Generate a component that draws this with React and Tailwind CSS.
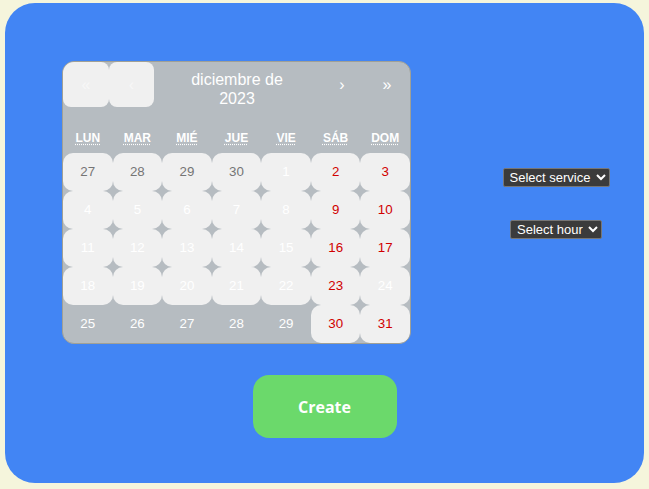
import { useState } from 'react';

const weekdays = [
    { short: 'LUN', title: 'lunes' },
    { short: 'MAR', title: 'martes' },
    { short: 'MIÉ', title: 'miércoles' },
    { short: 'JUE', title: 'jueves' },
    { short: 'VIE', title: 'viernes' },
    { short: 'SÁB', title: 'sábado' },
    { short: 'DOM', title: 'domingo' },
];

// kind: prev = neighbouring month, off = disabled, wkoff = disabled weekend, open
const days = [
    [27, 'prev'], [28, 'prev'], [29, 'prev'], [30, 'prev'], [1, 'off'], [2, 'wkoff'], [3, 'wkoff'],
    [4, 'off'], [5, 'off'], [6, 'off'], [7, 'off'], [8, 'off'], [9, 'wkoff'], [10, 'wkoff'],
    [11, 'off'], [12, 'off'], [13, 'off'], [14, 'off'], [15, 'off'], [16, 'wkoff'], [17, 'wkoff'],
    [18, 'off'], [19, 'off'], [20, 'off'], [21, 'off'], [22, 'off'], [23, 'wkoff'], [24, 'off'],
    [25, 'open'], [26, 'open'], [27, 'open'], [28, 'open'], [29, 'open'], [30, 'wkoff'], [31, 'wkoff'],
];

const tileClass = {
    prev: 'bg-[#f0f0f0] text-[#757575]',
    off: 'bg-[#f0f0f0] text-white',
    wkoff: 'bg-[#f0f0f0] text-[#d10000]',
    open: 'text-white',
};

function Calendar() {
    return (
        <div className="w-[349px] bg-[#b6bcc1] border border-[#a0a096] rounded-[12px] overflow-hidden font-['Liberation_Sans',Arial,sans-serif] leading-[1.125em]">
            <div className="flex h-[45px] mb-4">
                <button className="min-w-[46px] bg-[#f0f0f0] rounded-[8px] text-[#f7f7f7] text-base">«</button>
                <button className="min-w-[45px] bg-[#f0f0f0] rounded-[8px] text-[#f7f7f7] text-base">‹</button>
                <button className="grow flex justify-center items-start pt-[8px] text-white text-base">
                    <span className="w-[100px] leading-[19px]">diciembre de 2023</span>
                </button>
                <button className="min-w-[44px] text-white text-base">›</button>
                <button className="min-w-[46px] text-white text-base">»</button>
            </div>
            <div className="grid grid-cols-7 text-center text-[12px] font-bold uppercase text-white">
                {weekdays.map(w => (
                    <div key={w.short} className="p-[6px]">
                        <abbr title={w.title} className="underline decoration-dotted underline-offset-2">{w.short}</abbr>
                    </div>
                ))}
            </div>
            <div className="grid grid-cols-7">
                {days.map(([n, kind], i) => (
                    <button
                        key={i}
                        className={`h-[38px] rounded-[10px] text-[13.33px] text-center ${tileClass[kind]}`}
                    >
                        {n}
                    </button>
                ))}
            </div>
        </div>
    );
}

export default function App() {
    const [service, setService] = useState('');
    const [hour, setHour] = useState('');

    return (
        <div className="min-h-[489px] bg-[#f5f5dc] pt-[3px] px-[5px] pb-[6px]">
            <div className="h-[480px] bg-[#4285f4] rounded-[30px] pt-[58px] pl-[57px] flex flex-col">
                <div className="flex">
                    <Calendar />
                    <div className="w-[140px] ml-[75px] mt-[107px] flex flex-col items-center gap-[33px] font-['Liberation_Sans',Arial,sans-serif]">
                        <select
                            value={service}
                            onChange={e => setService(e.target.value)}
                            className="bg-[#3b3b3b] text-white text-[13px] border border-[#767676] rounded-[2px] px-[2px] h-[19px]"
                        >
                            <option value="">Select service</option>
                            <option value="cut">Haircut</option>
                        </select>
                        <select
                            value={hour}
                            onChange={e => setHour(e.target.value)}
                            className="bg-[#3b3b3b] text-white text-[13px] border border-[#767676] rounded-[2px] px-[2px] h-[19px]"
                        >
                            <option value="">Select hour</option>
                            <option value="10">10:00</option>
                        </select>
                    </div>
                </div>
                <div className="flex justify-center pr-[57px] mt-[31px]">
                    <button className="w-[144px] h-[63px] bg-[#6bd96b] rounded-[16px] text-white font-bold text-base font-['Open_Sans',sans-serif]">
                        Create
                    </button>
                </div>
            </div>
        </div>
    );
}
